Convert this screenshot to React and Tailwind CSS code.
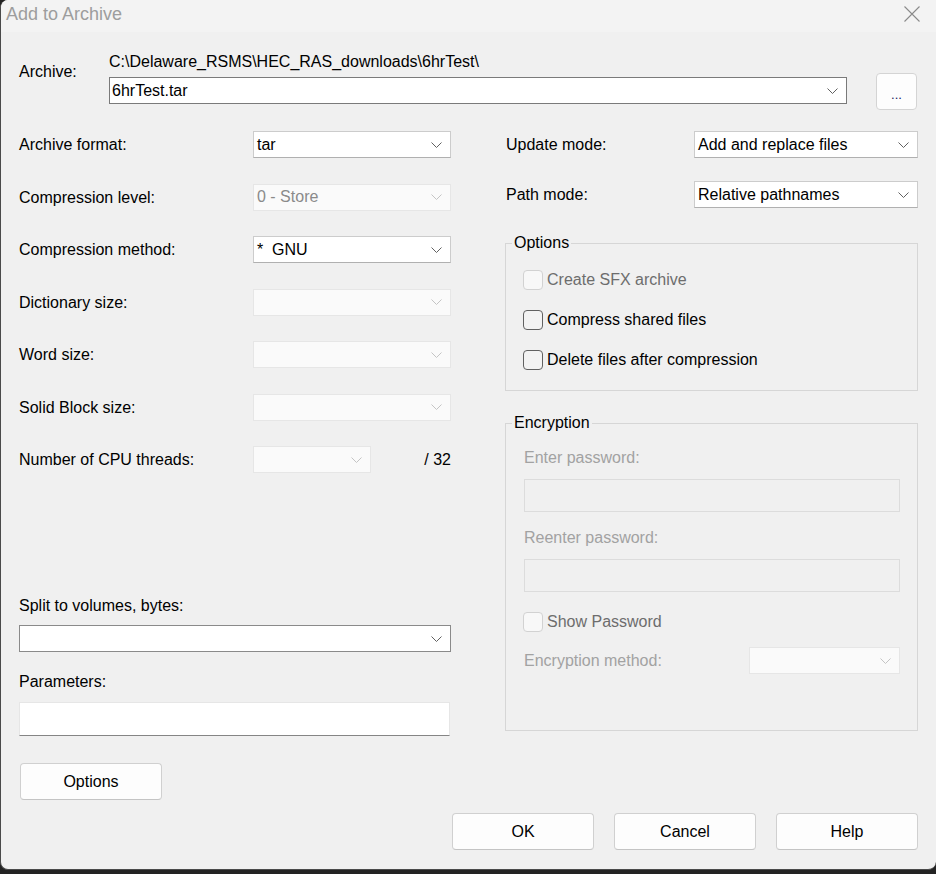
const Chevron = ({ color = "#606060" }) => (
  <svg width="11" height="6" viewBox="0 0 11 6" fill="none" className="shrink-0">
    <path d="M0.5 0.5 L5.5 5.5 L10.5 0.5" stroke={color} strokeWidth="1" />
  </svg>
);

// Windows-like dropdown: "edit" = editable combo (dark border), "off" = disabled
function Combo({ value = "", kind = "list", className = "" }) {
  const look =
    kind === "edit"
      ? "bg-white border-[#7a7a7a] text-black pl-[2px]"
      : kind === "off"
      ? "bg-[#fafafa] border-[#e6e6e6] text-[#8a8a8a] pl-[3px]"
      : "bg-white border-[#cccccc] border-b-[#b0b0b0] text-black pl-[3px]";
  return (
    <div className={`flex items-center justify-between h-[27px] border pr-[8px] ${look} ${className}`}>
      <span className="whitespace-pre leading-[20px]">{value}</span>
      <Chevron color={kind === "off" ? "#c4c4c4" : "#606060"} />
    </div>
  );
}

function Check({ label, disabled }) {
  return (
    <div className="flex items-center h-[20px] gap-[4px]">
      <div
        className={`w-[20px] h-[20px] rounded-[4px] border ${
          disabled ? "border-[#d2d2d2] bg-[#f8f8f8]" : "border-[#616161] bg-[#f3f3f3]"
        }`}
      />
      <span className={`leading-[20px] ${disabled ? "text-[#6d6d6d]" : "text-black"}`}>{label}</span>
    </div>
  );
}

function Button({ children, className = "" }) {
  return (
    <button className={`w-[142px] h-[37px] bg-[#fdfdfd] border border-[#d0d0d0] border-b-[#c4c4c4] rounded-[4px] text-black ${className}`}>
      {children}
    </button>
  );
}

const leftRows = [
  { label: "Archive format:", value: "tar", kind: "list" },
  { label: "Compression level:", value: "0 - Store", kind: "off" },
  { label: "Compression method:", value: "*  GNU", kind: "list" },
  { label: "Dictionary size:", value: "", kind: "off" },
  { label: "Word size:", value: "", kind: "off" },
  { label: "Solid Block size:", value: "", kind: "off" },
];

export default function App() {
  return (
    <div className="w-[936px] h-[874px] bg-[#232323] overflow-hidden font-['Liberation_Sans',Arial,sans-serif] text-[16px] text-black">
      <div className="h-[870px] bg-[#f0f0f0] border-l border-b border-[#4a4a4a] rounded-tl-[8px] rounded-b-[8px] overflow-hidden flex flex-col">
        {/* title bar */}
        <div className="h-[32px] shrink-0 bg-[#f3f3f3] flex items-center justify-between pl-[5px] pr-[16px]">
          <span className="text-[18px] text-[#9d9d9d] leading-[22px] -mt-[4px]">Add to Archive</span>
          <svg width="16" height="16" viewBox="0 0 16 16" className="-mt-[4px]">
            <path d="M0.5 0.5 L15.5 15.5 M15.5 0.5 L0.5 15.5" stroke="#8a8a8a" strokeWidth="1.1" />
          </svg>
        </div>

        <div className="pl-[18px] pr-[18px]">
          {/* archive path */}
          <div className="flex items-start pt-[20px]">
            <span className="w-[90px] shrink-0 leading-[20px] mt-[10px]">Archive:</span>
            <div className="w-[738px] flex flex-col">
              <span className="leading-[20px]">C:\Delaware_RSMS\HEC_RAS_downloads\6hrTest\</span>
              <Combo value="6hrTest.tar" kind="edit" className="mt-[5px]" />
            </div>
            <button className="ml-[29px] mt-[21px] w-[41px] h-[37px] bg-[#fdfdfd] border border-[#d4d4d4] rounded-[4px] text-[13px] text-[#1a1a60] leading-none pt-[6px]">
              ...
            </button>
          </div>

          <div className="flex items-start mt-[21px] gap-[54px]">
            {/* left column */}
            <div className="w-[432px] flex flex-col">
              <div className="flex flex-col gap-[25.5px]">
                {leftRows.map((r) => (
                  <div key={r.label} className="flex items-center h-[27px]">
                    <span className="w-[234px] shrink-0 leading-[20px] pt-[1px]">{r.label}</span>
                    <Combo value={r.value} kind={r.kind} className="w-[198px]" />
                  </div>
                ))}
                <div className="flex items-center h-[27px]">
                  <span className="w-[234px] shrink-0 leading-[20px] pt-[1px]">Number of CPU threads:</span>
                  <Combo kind="off" className="w-[118px]" />
                  <span className="ml-auto leading-[20px] pt-[1px]">/ 32</span>
                </div>
              </div>

              <span className="mt-[123px] leading-[20px]">Split to volumes, bytes:</span>
              <Combo kind="edit" className="mt-[9px] w-[432px] border-[#8a8a8a]" />

              <span className="mt-[20px] leading-[20px]">Parameters:</span>
              <div className="mt-[10px] w-[431px] h-[34px] bg-white border border-[#e6e6e6] border-b-[#858585]" />

              <Button className="mt-[27px] ml-[1px]">Options</Button>
            </div>

            {/* right column */}
            <div className="w-[413px] flex flex-col">
              <div className="flex items-center h-[27px]">
                <span className="w-[189px] shrink-0 pl-[1px] pt-[1px] leading-[20px]">Update mode:</span>
                <Combo value="Add and replace files" className="w-[224px]" />
              </div>
              <div className="flex items-center h-[27px] mt-[23px]">
                <span className="w-[189px] shrink-0 pl-[1px] pt-[1px] leading-[20px]">Path mode:</span>
                <Combo value="Relative pathnames" className="w-[224px]" />
              </div>

              <fieldset className="mt-[25px] border border-[#d6d6d6] pb-[20px]">
                <legend className="ml-[6px] px-[2px] leading-[20px]">Options</legend>
                <div className="flex flex-col gap-[20px] pt-[17px] pl-[17px]">
                  <Check label="Create SFX archive" disabled />
                  <Check label="Compress shared files" />
                  <Check label="Delete files after compression" />
                </div>
              </fieldset>

              <fieldset className="mt-[22px] border border-[#d6d6d6] pb-[56px]">
                <legend className="ml-[6px] px-[2px] leading-[20px]">Encryption</legend>
                <div className="flex flex-col pt-[15px] pl-[18px] pr-[17px] text-[#a2a2a2]">
                  <span className="leading-[20px]">Enter password:</span>
                  <div className="mt-[11px] h-[33px] border border-[#dcdcdc]" />
                  <span className="mt-[16px] leading-[20px]">Reenter password:</span>
                  <div className="mt-[11px] h-[33px] border border-[#dcdcdc]" />
                  <div className="mt-[20px] -ml-[1px]">
                    <Check label="Show Password" disabled />
                  </div>
                  <div className="mt-[15px] flex items-center h-[27px]">
                    <span className="w-[225px] shrink-0 leading-[20px]">Encryption method:</span>
                    <Combo kind="off" className="w-[151px]" />
                  </div>
                </div>
              </fieldset>
            </div>
          </div>

          {/* dialog buttons */}
          <div className="flex justify-end gap-[20px] mt-[13px]">
            <Button>OK</Button>
            <Button>Cancel</Button>
            <Button>Help</Button>
          </div>
        </div>
      </div>
    </div>
  );
}
